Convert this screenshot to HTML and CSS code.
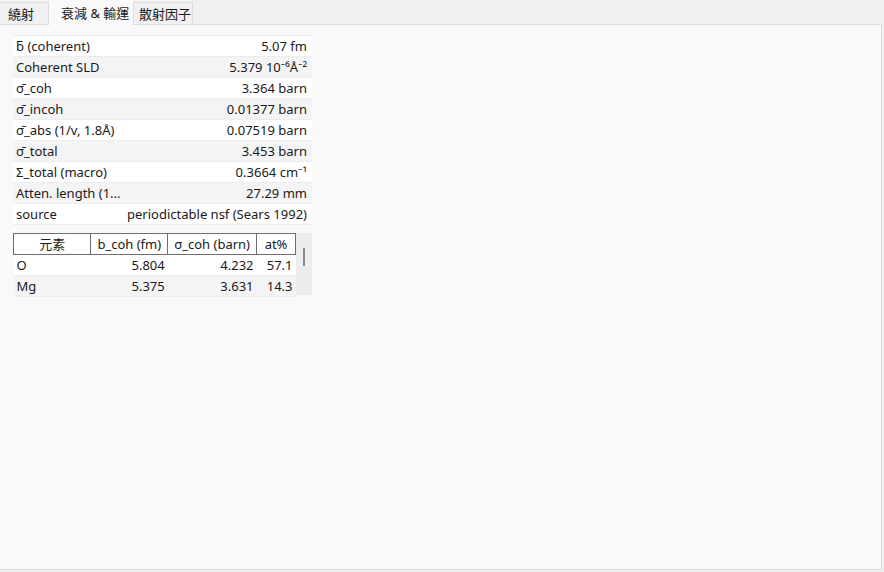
FILE: index.html
```html
<!DOCTYPE html>
<html lang="zh-Hant">
<head>
    <meta charset="UTF-8">
    <title>衰減 & 輸運</title>
    <link rel="stylesheet" href="styles.css">
</head>
<body>
    <div class="tabs">
        <div class="tab">繞射</div>
        <div class="tab active">衰減 &amp; 輸運</div>
        <div class="tab">散射因子</div>
    </div>
    <div class="pane">
        <div class="props">
            <div class="row"><span>ƃ (coherent)</span><span>5.07 fm</span></div>
            <div class="row"><span>Coherent SLD</span><span>5.379 10⁻⁶Å⁻²</span></div>
            <div class="row"><span>σ̄_coh</span><span>3.364 barn</span></div>
            <div class="row"><span>σ̄_incoh</span><span>0.01377 barn</span></div>
            <div class="row"><span>σ̄_abs (1/v, 1.8Å)</span><span>0.07519 barn</span></div>
            <div class="row"><span>σ̄_total</span><span>3.453 barn</span></div>
            <div class="row"><span>Σ_total (macro)</span><span>0.3664 cm⁻¹</span></div>
            <div class="row"><span>Atten. length (1...</span><span>27.29 mm</span></div>
            <div class="row"><span>source</span><span>periodictable nsf (Sears 1992)</span></div>
        </div>

        <div class="elements">
            <table class="elem-table">
                <thead>
                    <tr>
                        <th class="c1">元素</th>
                        <th class="c2">b_coh (fm)</th>
                        <th class="c3">σ_coh (barn)</th>
                        <th class="c4">at%</th>
                    </tr>
                </thead>
                <tbody>
                    <tr><td>O</td><td class="num">5.804</td><td class="num">4.232</td><td class="num">57.1</td></tr>
                    <tr><td>Mg</td><td class="num">5.375</td><td class="num">3.631</td><td class="num">14.3</td></tr>
                </tbody>
            </table>
            <div class="scrollbar"><div class="thumb"></div></div>
        </div>
    </div>
</body>
</html>
```
FILE: styles.css
```css
body {
    margin: 0;
    background: #f0f0f0;
    font-family: "Noto Sans", "Noto Sans CJK TC", sans-serif;
    font-size: 13px;
    color: #1a1a1a;
    width: 884px;
    height: 572px;
    overflow: hidden;
}
.tabs {
    display: flex;
    align-items: flex-end;
    height: 24px;
}
.tab {
    height: 22px;
    line-height: 22px;
    background: #f0f0f0;
    border: 1px solid #dcdcdc;
    border-bottom: none;
    box-sizing: border-box;
    font-size: 13px;
    white-space: nowrap;
    overflow: hidden;
}
.tab:first-child {
    width: 49px;
    padding-left: 8px;
    border-left: none;
}
.tab.active {
    height: 25px;
    line-height: 24px;
    background: #f9f9f9;
    border-color: #f9f9f9;
    width: 84px;
    padding-left: 11px;
    position: relative;
    top: 1px;
}
.tab:last-child {
    width: 60px;
    padding-left: 5px;
}
.pane {
    height: 546px;
    width: 882px;
    box-sizing: border-box;
    background: #f9f9f9;
    border: 1px solid #dcdcdc;
    border-left: none;
    padding: 10px 13px;
}
.props {
    width: 299px;
    border-top: 1px solid #ececec;
}
.row {
    display: flex;
    justify-content: space-between;
    height: 20px;
    line-height: 20px;
    padding: 0 5px 0 3px;
    border-bottom: 1px solid #ececec;
    white-space: nowrap;
    background: #ffffff;
}
.row:nth-child(even) {
    background: #f4f4f4;
}
.num {
    text-align: right;
}
.elements {
    display: flex;
    margin-top: 8px;
    width: 299px;
}
.elem-table {
    border-collapse: collapse;
    width: 283px;
}
.elem-table th {
    font-weight: normal;
    height: 20px;
    padding: 0;
    border: 1px solid #6e6e6e;
    background: #ffffff;
    text-align: center;
    line-height: 20px;
    white-space: nowrap;
}
.elem-table .c1 { width: 77px; }
.elem-table .c2 { width: 76px; }
.elem-table .c3 { width: 88px; }
.elem-table .c4 { width: 38px; }
.elem-table td {
    height: 20px;
    line-height: 20px;
    padding: 0 3px;
    border-bottom: 1px solid #ececec;
}
.elem-table tbody tr:nth-child(odd) td {
    background: #ffffff;
}
.elem-table tbody tr:nth-child(even) td {
    background: #f4f4f4;
}
.scrollbar {
    width: 16px;
    height: 62px;
    background: #ececec;
    position: relative;
}
.thumb {
    position: absolute;
    left: 7px;
    top: 15px;
    width: 2px;
    height: 18px;
    background: #8a8a8a;
}
```
